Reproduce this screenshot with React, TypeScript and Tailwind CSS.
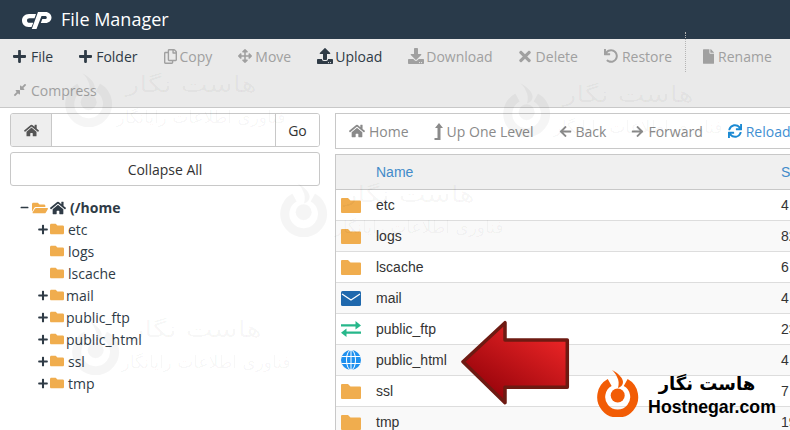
import {
  FaArrowLeft,
  FaArrowRight,
  FaArrowsAlt,
  FaCompressAlt,
  FaDownload,
  FaFile,
  FaFolder,
  FaFolderOpen,
  FaHome,
  FaMinus,
  FaPlus,
  FaRegCopy,
  FaSync,
  FaTimes,
  FaUndo,
  FaUpload,
} from "react-icons/fa";
import type { ReactNode } from "react";

function CpanelLogo() {
  return (
    <svg width="31" height="20" viewBox="0 0 31 20" fill="#fff">
      <path d="M15 4H8C3.500 4 1 7 1 10.500S3.500 17 7.500 17H10.500L12.300 12.800H8.500C7 12.800 6 12 6 10.500S7 8.200 8.500 8.200H13.500Z" />
      <path d="M17 2H24.500C28 2 30.500 4.500 30.500 7.500S28 13 24.500 13H19.800L21.300 9H24C25 9 25.800 8.500 25.800 7.500S25 6 24 6H20.500L15.500 19H10.800Z" />
    </svg>
  );
}

function BrandMark({ size, color }: { size: number; color: string }) {
  return (
    <svg width={size} height={size * 1.12} viewBox="0 0 42 47" fill="none">
      <path d="M28.700 12.600A16.500 16.500 0 1 1 12.700 12.600" stroke={color} strokeWidth="8" />
      <circle cx="20.700" cy="25.500" r="7" fill={color} />
      <path d="M15 0C21 3 26 8 26 12 26 15 24 17 21 18 22 14 22 10 20 7 19 4 17 2 15 0Z" fill={color} />
    </svg>
  );
}

function Watermark({ className }: { className: string }) {
  return (
    <div className={`absolute pointer-events-none font-['DejaVu_Sans',sans-serif] text-black/[0.04] text-center ${className}`}>
      <div className="text-[22px] leading-[30px] scale-x-[1.3] -translate-x-[10px]">هاست نگار</div>
      <div className="text-[17px] leading-[34px]">فناوری اطلاعات رایانگار</div>
    </div>
  );
}

function ToolbarButton({ icon, label, off, box }: { icon: ReactNode; label: string; off?: boolean; box: string }) {
  return (
    <div className={`flex items-center h-[34px] px-[13px] text-[14px] ${off ? "text-[#a0a0a0]" : "text-[#2f3b46]"}`}>
      <span className={`flex items-center shrink-0 ${box}`}>{icon}</span>
      <span>{label}</span>
    </div>
  );
}

function NavButton({ icon, label, blue }: { icon: ReactNode; label: string; blue?: boolean }) {
  return (
    <div className={`flex items-center gap-[4px] px-[12.500px] text-[14px] shrink-0 ${blue ? "text-[#3f8fd2]" : "text-[#8a8a8a]"}`}>
      {icon}
      <span>{label}</span>
    </div>
  );
}

function UpLevelIcon() {
  return (
    <svg width="9" height="17" viewBox="0 0 9 17" fill="currentColor">
      <path d="M5 0l4 5H6.500v12H.5v-2h3V5H1Z" />
    </svg>
  );
}

function TreeRow({ name, plus, shift }: { name: string; plus?: boolean; shift?: boolean }) {
  return (
    <div className="flex items-center h-[22px] pl-[28px] text-[14px] text-[#2f3b46]">
      <span className="w-[12px] shrink-0">{plus && <FaPlus size={11} className="w-[10px] text-[#2f3b46]" />}</span>
      <FaFolder size={14} className="text-[#f0ad4e] shrink-0" />
      <span className={shift ? "ml-[4px]" : "ml-[2px]"}>{name}</span>
    </div>
  );
}

function FolderIcon() {
  return (
    <svg width="20" height="15" viewBox="0 0 20 15" fill="#f0ad4e">
      <path d="M1 0h6l2.500 2.500H19a1 1 0 0 1 1 1V14a1 1 0 0 1-1 1H1a1 1 0 0 1-1-1V1a1 1 0 0 1 1-1Z" />
    </svg>
  );
}

function MailIcon() {
  return (
    <svg width="20" height="15" viewBox="0 0 20 15">
      <rect width="20" height="15" rx="1.500" fill="#1f68ad" />
      <path d="M1 3l9 6 9-6" stroke="#fff" strokeWidth="1.200" fill="none" />
    </svg>
  );
}

function TransferIcon() {
  return (
    <svg width="20" height="16" viewBox="0 0 20 16" fill="#26b78a">
      <path d="M0 3.200h14.500V0L20 4.400l-5.500 4.200V5.500H0Z" />
      <path d="M20 10.500H5.500V7.500L0 11.800 5.500 16v-3.200H20Z" />
    </svg>
  );
}

function GlobeIcon() {
  return (
    <svg width="20" height="20" viewBox="0 0 20 20">
      <circle cx="10" cy="10" r="10" fill="#1e90ef" />
      <g stroke="#fff" strokeWidth="1" fill="none">
        <ellipse cx="10" cy="10" rx="4.500" ry="10" />
        <path d="M10 0v20M.5 6.500h19M.5 13.500h19" />
      </g>
    </svg>
  );
}

const files: { name: string; size: string; icon: ReactNode }[] = [
  { name: "etc", size: "4 KB", icon: <FolderIcon /> },
  { name: "logs", size: "82 KB", icon: <FolderIcon /> },
  { name: "lscache", size: "6 KB", icon: <FolderIcon /> },
  { name: "mail", size: "4 KB", icon: <MailIcon /> },
  { name: "public_ftp", size: "23 KB", icon: <TransferIcon /> },
  { name: "public_html", size: "4 KB", icon: <GlobeIcon /> },
  { name: "ssl", size: "7 KB", icon: <FolderIcon /> },
  { name: "tmp", size: "19 KB", icon: <FolderIcon /> },
];

export default function App() {
  return (
    <div className="relative w-[790px] h-[430px] overflow-hidden bg-white font-['Open_Sans',sans-serif]">
      <header className="flex items-center h-[39px] bg-[#293a4a] pl-[21px] gap-[9px]">
        <CpanelLogo />
        <span className="text-[18px] text-white">File Manager</span>
      </header>

      <div className="flex flex-wrap h-[69px] bg-[#eaeaea] border-b border-[#c8c8c8] content-start">
        <ToolbarButton box="w-[18px]" icon={<FaPlus size={15} className="w-[13px]" />} label="File" />
        <ToolbarButton box="w-[17px]" icon={<FaPlus size={15} className="w-[13px]" />} label="Folder" />
        <ToolbarButton off box="w-[16px]" icon={<FaRegCopy size={15} className="w-[13px]" />} label="Copy" />
        <ToolbarButton off box="w-[17px]" icon={<FaArrowsAlt size={14} />} label="Move" />
        <ToolbarButton box="w-[18px]" icon={<FaUpload size={16} />} label="Upload" />
        <ToolbarButton off box="w-[18px]" icon={<FaDownload size={16} />} label="Download" />
        <ToolbarButton off box="w-[17px]" icon={<FaTimes size={17} className="w-[12px]" />} label="Delete" />
        <ToolbarButton off box="w-[18px]" icon={<FaUndo size={14} />} label="Restore" />
        <div className="h-[40px] -mt-[7px] mr-[4px] border-l border-dotted border-[#b5b5b5]" />
        <ToolbarButton off box="w-[15px]" icon={<FaFile size={15} className="w-[11px]" />} label="Rename" />
        <ToolbarButton off box="w-[18px]" icon={<FaCompressAlt size={14} />} label="Compress" />
      </div>

      <div className="flex pt-[5px] pl-[10px] gap-[15px]">
        <aside className="w-[310px] shrink-0">
          <div className="flex h-[34px] border border-[#c8c8c8] rounded-[3px] overflow-hidden text-[14px] text-[#333]">
            <div className="flex items-center justify-center w-[41px] bg-[#eeeeee] border-r border-[#c8c8c8] text-[#555]">
              <FaHome size={15} />
            </div>
            <div className="flex-1 bg-white" />
            <div className="flex items-center justify-center w-[44px] bg-white border-l border-[#c8c8c8]">Go</div>
          </div>
          <div className="flex items-center justify-center h-[34px] mt-[5px] border border-[#c8c8c8] rounded-[3px] text-[14px] text-[#333]">
            Collapse All
          </div>

          <div className="mt-[11px]">
            <div className="flex items-center h-[21px] pl-[10px] text-[14px] font-bold text-[#2f3b46]">
              <FaMinus size={9} className="w-[9px] shrink-0" />
              <FaFolderOpen size={16} className="text-[#f0ad4e] ml-[3px] shrink-0" />
              <FaHome size={16} className="ml-[2px] shrink-0" />
              <span className="ml-[4px]">(/home</span>
            </div>
            <TreeRow plus shift name="etc" />
            <TreeRow shift name="logs" />
            <TreeRow shift name="lscache" />
            <TreeRow plus name="mail" />
            <TreeRow plus name="public_ftp" />
            <TreeRow plus name="public_html" />
            <TreeRow plus shift name="ssl" />
            <TreeRow plus shift name="tmp" />
          </div>
        </aside>

        <main className="w-[500px] shrink-0">
          <div className="flex items-center h-[36px] w-[520px] pl-[0.500px] border border-[#c8c8c8] bg-white">
            <NavButton icon={<FaHome size={16} />} label="Home" />
            <NavButton icon={<UpLevelIcon />} label="Up One Level" />
            <NavButton icon={<FaArrowLeft size={13} />} label="Back" />
            <NavButton icon={<FaArrowRight size={13} />} label="Forward" />
            <NavButton blue icon={<FaSync size={14} className="text-[#1b8ad3]" />} label="Reload" />
          </div>

          <div className="mt-[5px] w-[520px] border-l border-t border-[#c8c8c8] font-['Liberation_Sans',sans-serif] text-[14px]">
            <div className="flex items-center h-[35px] bg-[#f0f0f0] border-b border-[#c8c8c8] text-[#428bca]">
              <span className="w-[40px] shrink-0" />
              <span className="w-[405px] shrink-0">Name</span>
              <span>Size</span>
            </div>
            {files.map((file, i) => (
              <div
                key={file.name}
                className={`flex items-center h-[31px] border-b border-[#dddddd] text-[#333] ${i % 2 === 1 ? "bg-[#f9f9f9]" : "bg-white"}`}
              >
                <span className="flex w-[40px] pl-[5px] shrink-0">{file.icon}</span>
                <span className="w-[405px] shrink-0">{file.name}</span>
                <span>{file.size}</span>
              </div>
            ))}
          </div>
        </main>
      </div>

      {/* faint site watermarks over the page */}
      <div className="absolute left-[65px] top-[73px] pointer-events-none"><BrandMark size={48} color="rgba(0,0,0,0.04)" /></div>
      <div className="absolute left-[503px] top-[83px] pointer-events-none"><BrandMark size={48} color="rgba(0,0,0,0.04)" /></div>
      <div className="absolute left-[280px] top-[183px] pointer-events-none"><BrandMark size={48} color="rgba(0,0,0,0.04)" /></div>
      <div className="absolute left-[72px] top-[321px] pointer-events-none"><BrandMark size={48} color="rgba(0,0,0,0.04)" /></div>
      <Watermark className="left-[115px] top-[70px] w-[172px]" />
      <Watermark className="left-[552px] top-[80px] w-[172px]" />
      <Watermark className="left-[333px] top-[180px] w-[172px]" />
      <Watermark className="left-[120px] top-[315px] w-[172px]" />

      <svg className="absolute left-[455px] top-[315px]" width="120" height="95" viewBox="455 315 120 95">
        <defs>
          <linearGradient id="arrowFill" x1="1" y1="0" x2="0.2" y2="1">
            <stop offset="0" stopColor="#f92b2b" />
            <stop offset="1" stopColor="#8f0008" />
          </linearGradient>
        </defs>
        <path
          d="M463 361.700 505 322.700V340H567.300V387.300H505V402.700Z"
          fill="url(#arrowFill)"
          stroke="#6e1a12"
          strokeWidth="3.500"
          strokeLinejoin="round"
        />
      </svg>

      <div className="absolute left-[597px] top-[370px]"><BrandMark size={42} color="#f25c05" /></div>
      <div className="absolute left-[646px] top-[372px] w-[132px] text-center text-black">
        <div className="font-['DejaVu_Sans',sans-serif] font-bold text-[18px] leading-[24px] -translate-x-[5px]">هاست نگار</div>
        <div className="font-['Liberation_Sans',sans-serif] font-bold text-[17.700px] leading-[22px] whitespace-nowrap">Hostnegar.com</div>
      </div>
    </div>
  );
}
